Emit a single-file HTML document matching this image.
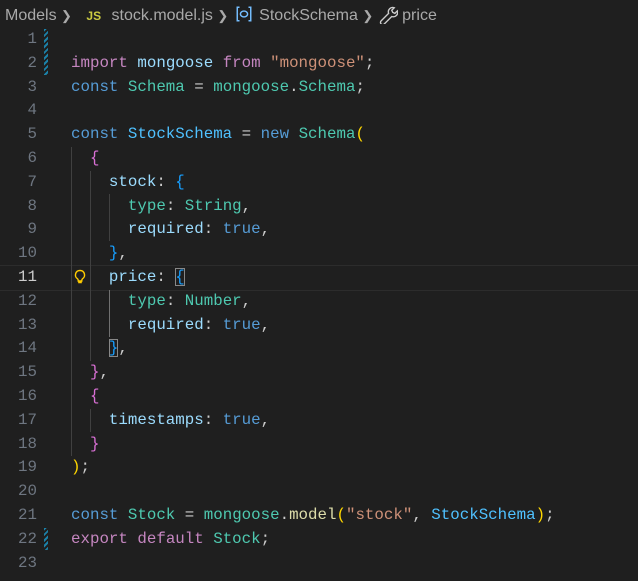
<!DOCTYPE html><html><head><style>
body{margin:0;background:#1f1f1f;width:638px;height:581px;overflow:hidden;position:relative;font-family:"Liberation Mono",monospace;}
.bc{position:absolute;top:0;left:0;height:27px;font-family:"Liberation Sans",sans-serif;font-size:16px;color:#a9a9a9;line-height:31px;white-space:nowrap;}
.bc span{display:inline-block}
.ln{position:absolute;left:0;width:37px;text-align:right;font-size:15.8px;color:#6e7681;height:23.8px;line-height:23.8px}
.cl{position:absolute;left:71px;font-size:15.8px;height:23.8px;line-height:23.8px;white-space:pre;color:#cccccc}
.g{position:absolute;width:1px;background:#404040}
.k{color:#c586c0}.b{color:#569cd6}.v{color:#9cdcfe}.t{color:#4ec9b0}.s{color:#ce9178}.f{color:#dcdcaa}.c{color:#4fc1ff}
.y{color:#ffd700}.p{color:#da70d6}.u{color:#179fff}
.mod{position:absolute;left:44px;width:4px;background:repeating-linear-gradient(135deg,#1b81a8 0 2px,#1f1f1f 2px 4px)}
</style></head><body>
<div class="bc"><span style="margin-left:5px">Models</span> <span style="font-size:13px">&#x276F;</span> <span style="color:#cbcb41;font-weight:bold;font-size:12px;margin-left:10px">JS</span> <span style="margin-left:6px">stock.model.js</span> <span style="font-size:13px">&#x276F;</span>
<svg width="18" height="18" viewBox="0 0 16 16" style="vertical-align:-3px;margin-left:2px"><path d="M4 2H2v12h2M12 2h2v12h-2" stroke="#75beff" fill="none" stroke-width="1.3"/><ellipse cx="8" cy="8" rx="3.2" ry="2.6" stroke="#75beff" fill="none" stroke-width="1.3"/></svg>
<span style="margin-left:2px">StockSchema</span> <span style="font-size:13px">&#x276F;</span>
<svg width="20" height="20" viewBox="0 0 16 16" style="vertical-align:-4px"><path d="M2.5 13.5l6-6a3.5 3.5 0 0 1 4.5-4.5l-2 2 .8 1.7 1.7.8 2-2a3.5 3.5 0 0 1-4.5 4.5l-6 6a1 1 0 0 1-2.5-2.5z" stroke="#cccccc" fill="none" stroke-width="1.1"/></svg>
<span>price</span></div>

<div style="position:absolute;left:0;right:0;top:265px;height:24px;border-top:1px solid #2c2c2c;border-bottom:1px solid #2c2c2c"></div>

<div class="mod" style="top:29px;height:46px"></div>
<div class="mod" style="top:528px;height:22px"></div>

<div class="g" style="left:71px;top:147px;height:309px"></div>
<div class="g" style="left:90px;top:171px;height:190px"></div>
<div class="g" style="left:90px;top:409px;height:23px"></div>
<div class="g" style="left:109px;top:194px;height:47px"></div>
<div class="g" style="left:109px;top:290px;height:47px;background:#707070"></div>

<svg style="position:absolute;left:73px;top:269px" width="14" height="16" viewBox="0 0 14 16"><path d="M7 1.5a4.5 4.5 0 0 0-2.6 8.2c.5.4.8 1 .8 1.6v.7h3.6v-.7c0-.6.3-1.2.8-1.6A4.5 4.5 0 0 0 7 1.5zM5.2 13.5h3.6" stroke="#ffcc00" fill="none" stroke-width="1.4"/></svg>

<div id="c"></div>
<script>
var L=[
'',
'<span class="k">import</span> <span class="v">mongoose</span> <span class="k">from</span> <span class="s">"mongoose"</span>;',
'<span class="b">const</span> <span class="t">Schema</span> = <span class="t">mongoose</span>.<span class="t">Schema</span>;',
'',
'<span class="b">const</span> <span class="c">StockSchema</span> = <span class="b">new</span> <span class="t">Schema</span><span class="y">(</span>',
'  <span class="p">{</span>',
'    <span class="v">stock</span>: <span class="u">{</span>',
'      <span class="t">type</span>: <span class="t">String</span>,',
'      <span class="v">required</span>: <span class="b">true</span>,',
'    <span class="u">}</span>,',
'    <span class="v">price</span>: <span class="u" style="outline:1px solid #888;outline-offset:-1px">{</span>',
'      <span class="t">type</span>: <span class="t">Number</span>,',
'      <span class="v">required</span>: <span class="b">true</span>,',
'    <span class="u" style="outline:1px solid #888;outline-offset:-1px">}</span>,',
'  <span class="p">}</span>,',
'  <span class="p">{</span>',
'    <span class="v">timestamps</span>: <span class="b">true</span>,',
'  <span class="p">}</span>',
'<span class="y">)</span>;',
'',
'<span class="b">const</span> <span class="t">Stock</span> = <span class="t">mongoose</span>.<span class="f">model</span><span class="y">(</span><span class="s">"stock"</span>, <span class="c">StockSchema</span><span class="y">)</span>;',
'<span class="k">export</span> <span class="k">default</span> <span class="t">Stock</span>;',
''];
var h='';
for(var i=0;i<L.length;i++){var t=28+i*23.8;
h+='<div class="ln" style="top:'+t+'px;'+(i==10?'color:#cccccc':'')+'">'+(i+1)+'</div><div class="cl" style="top:'+t+'px">'+L[i]+'</div>';}
document.getElementById('c').innerHTML=h;
</script>
</body></html>
